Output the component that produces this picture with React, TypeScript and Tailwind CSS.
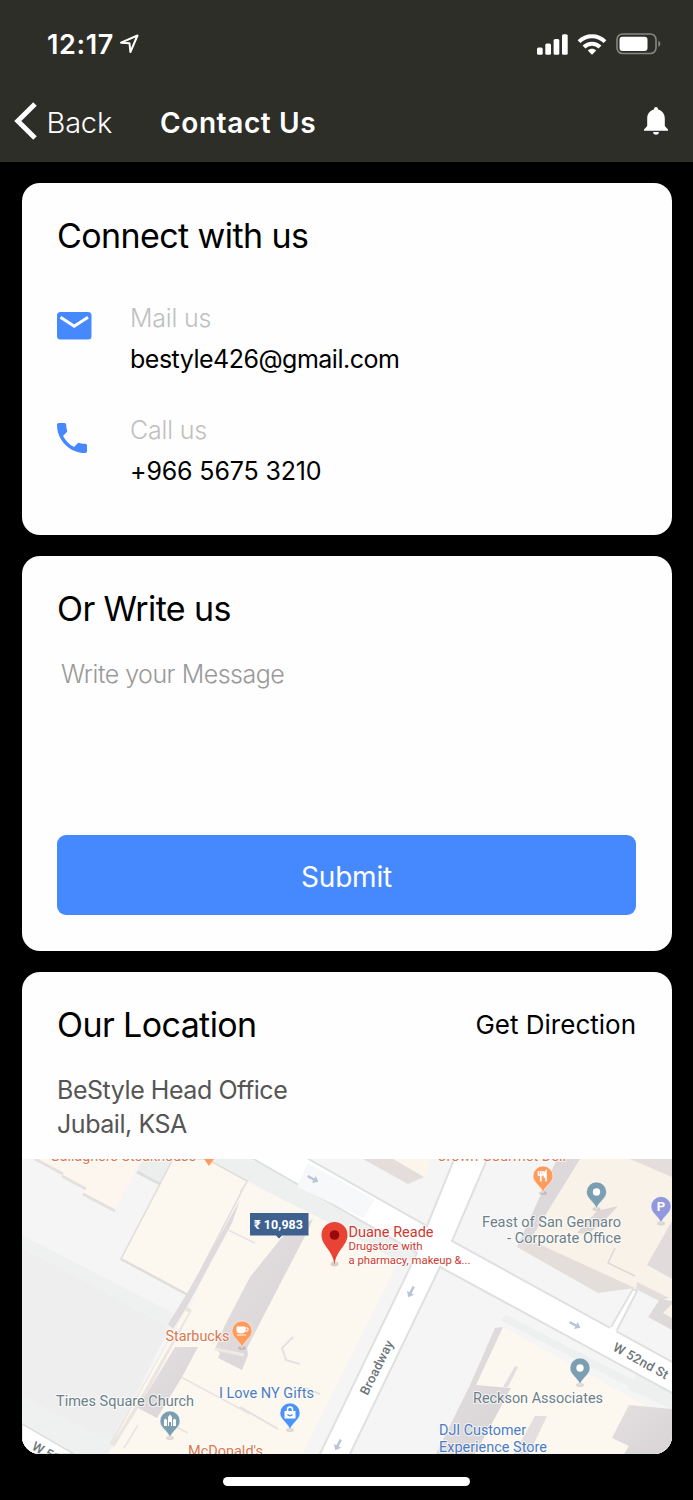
import type { ReactNode } from "react";

const Card = ({ className, children }: { className: string; children: ReactNode }) => (
  <section className={`w-full shrink-0 overflow-hidden rounded-[18px] bg-[#fefefe] ${className}`}>
    {children}
  </section>
);

const Title = ({ children }: { children: string }) => (
  <h2 className="text-[34px] leading-[44px] tracking-[-0.6px]">{children}</h2>
);

const StatusBar = () => (
  <div className="flex h-[84px] items-center justify-between pl-[47px] pr-[32.5px] pt-1">
    <div className="flex items-center gap-[6px]">
      <span className="w-[67px] whitespace-nowrap pt-px text-[27px] font-semibold leading-8 tracking-[0.6px]">12:17</span>
      <svg width="20" height="20" viewBox="0 0 20 20" fill="none" stroke="white" strokeWidth="2" strokeLinejoin="round">
        <path d="M1 8.7 17.500 1.500 10.400 18 9.500 9.300Z" />
      </svg>
    </div>
    <div className="flex items-center gap-[9px]">
      <svg width="31" height="21" viewBox="0 0 31 21" fill="white">
        <rect x="0" y="13.5" width="5.7" height="7.3" rx="1.5" />
        <rect x="8.3" y="9.5" width="5.7" height="11.3" rx="1.5" />
        <rect x="16.6" y="5" width="5.7" height="15.8" rx="1.5" />
        <rect x="25" y="0.2" width="5.7" height="20.6" rx="1.5" />
      </svg>
      <svg width="30" height="21" viewBox="0 0 30 21">
        <g fill="none" stroke="white" strokeWidth="4">
          <path d="M2 7.6C9.5.6 20.500.6 28 7.600" />
          <path d="M7 13C11.500 8.600 18.500 8.600 23 13" />
        </g>
        <path d="M10.800 16.500C13.200 14.200 16.800 14.200 19.200 16.500L15 20.800Z" fill="white" />
      </svg>
      <svg width="45" height="22" viewBox="0 0 45 22">
        <rect x="1" y="1" width="39" height="19.500" rx="5.500" fill="none" stroke="#878783" strokeWidth="1.600" />
        <rect x="3.500" y="3.700" width="28" height="14.300" rx="3" fill="white" />
        <path d="M42.300 7.700C45 9 45 12.500 42.300 13.800Z" fill="#878783" />
      </svg>
    </div>
  </div>
);

const NavBar = () => (
  <div className="flex h-[78px] items-center pl-[14px] pr-[25px]">
    <svg className="-mt-1" width="24" height="38" viewBox="0 0 24 38" fill="none" stroke="white" strokeWidth="5">
      <path d="M21 2 3.800 19 21 36" />
    </svg>
    <span className="ml-[8.5px] w-[113.5px] text-[29px] font-light leading-8 tracking-[-0.2px]">Back</span>
    <h1 className="flex-1 whitespace-nowrap text-[28px] font-semibold leading-8 tracking-[0.6px]">Contact Us</h1>
    <svg className="-mt-1" width="24" height="28" viewBox="0 0 24 28" fill="white">
      <path d="M12 0C13.300 0 14.100 1 14.100 2.500 18.300 3.700 20.800 7 20.800 11.200V19L24 22.500V23.700H0V22.500L3.200 19V11.200C3.200 7 5.700 3.700 9.900 2.500 9.900 1 10.700 0 12 0Z" />
      <path d="M9 25H15C15 26.500 13.700 27.700 12 27.700S9 26.500 9 25Z" />
    </svg>
  </div>
);

const MailIcon = () => (
  <svg width="35" height="28" viewBox="0 0 35 28">
    <rect width="34.500" height="27.500" rx="3.500" fill="#4689ff" />
    <path d="M3.500 5.300 17.200 14.300 31 5.300" fill="none" stroke="white" strokeWidth="3" />
  </svg>
);

const PhoneIcon = () => (
  <svg className="-mt-px" width="30" height="30" viewBox="3 3 18 18" fill="#4689ff">
    <path d="M6.620 10.790c1.440 2.830 3.760 5.140 6.590 6.590l2.200-2.200c.270-.270.670-.360 1.020-.240 1.120.370 2.330.570 3.570.570.550 0 1 .450 1 1V20c0 .550-.450 1-1 1-9.390 0-17-7.610-17-17 0-.550.450-1 1-1h3.500c.550 0 1 .450 1 1 0 1.250.200 2.450.570 3.570.110.350.030.740-.250 1.020l-2.200 2.200z" />
  </svg>
);

type ContactRowProps = { icon: ReactNode; label: string; value: string; valueClass: string };

const ContactRow = ({ icon, label, value, valueClass }: ContactRowProps) => (
  <div className="flex h-[112px]">
    <div className="w-[73px] pt-[14px]">{icon}</div>
    <div>
      <p className="text-[25px] font-light leading-[41px] tracking-[-0.2px] text-[#c0c0c0]">{label}</p>
      <p className={`whitespace-nowrap text-[25px] leading-[41px] ${valueClass}`}>{value}</p>
    </div>
  </div>
);

type PinProps = { x: number; y: number; fill: string; children?: ReactNode };

// x, y is the centre of the pin's head
const Pin = ({ x, y, fill, children }: PinProps) => (
  <g transform={`translate(${x} ${y})`}>
    <ellipse cx="0" cy="17" rx="4" ry="2" fill="#000" opacity="0.12" />
    <path d="M0 17C-1.500 10-10 7-10 0A10 10 0 1 1 10 0C10 7 1.500 10 0 17Z" fill={fill} stroke="white" strokeWidth="0.500" />
    {children}
  </g>
);

type LabelProps = { x: number; y: number; w: number; fill: string; size?: number; children: string };

const Label = ({ x, y, w, fill, size = 14.5, children }: LabelProps) => (
  <text
    x={x}
    y={y}
    textLength={w}
    lengthAdjust="spacingAndGlyphs"
    fontSize={size}
    fill={fill}
    stroke="white"
    strokeWidth="2"
    strokeOpacity="0.700"
    strokeLinejoin="round"
    paintOrder="stroke"
  >
    {children}
  </text>
);

const Arrow = ({ x, y, angle }: { x: number; y: number; angle: number }) => (
  <path
    transform={`translate(${x} ${y}) rotate(${angle})`}
    d="M-6-1.200H1V-4L6 0 1 4V1.200H-6Z"
    fill="#b9c4d6"
  />
);

const ORANGE = "#d97850";
const SLATE = "#6b8088";
const BLUE = "#4b7cc0";
const RED = "#cc392f";

const LocationMap = () => (
  <svg className="block w-full" height="295" viewBox="22 1159 650 295" preserveAspectRatio="none" fontFamily="Roboto, sans-serif" fontWeight="400">
    <defs>
      <linearGradient id="shade" x1="0" y1="0" x2="1" y2="1">
        <stop offset="0" stopColor="#e4dfdf" />
        <stop offset="1" stopColor="#d8d3d6" />
      </linearGradient>
    </defs>
    <rect x="22" y="1159" width="650" height="295" fill="#f5f5f5" />

    {/* block on the west side */}
    <path d="M22 1235 173 1313 168 1330 108 1454H22Z" fill="#eff1f0" />
    <path d="M22 1248 165 1325 166 1334 112 1438 100 1436 22 1396Z" fill="#eeeeee" />
    <path d="M22 1424 74 1454H22Z" fill="#fff" stroke="#dcdddd" strokeWidth="1.500" />
    <path d="M143 1159H173L160 1184 137 1172Z" fill="#eceeee" />
    <path d="M137 1172 160 1184" stroke="#dcdedf" strokeWidth="3" />
    <path d="M212 1159H250L417 1253 405 1268 252 1183 212 1162Z" fill="#eef0ef" />

    {/* buildings between the park and Broadway */}
    <path d="M35 1159 62 1174 62 1177 85 1189 83 1194 115 1211 142 1159Z" fill="#fcf6ee" />
    <path d="M35 1159 63 1174M62 1176 86 1189M83 1194 115 1211" fill="none" stroke="#e5dfdd" strokeWidth="3" />
    <path d="M247 1182 330 1223 396 1260 395 1268 302 1454H108L114 1446 188 1312Z" fill="#fcf7ef" />
    <path d="M173 1159H207L247 1181 188 1295 121 1259Z" fill="#fcf7ef" stroke="#e2dcda" strokeWidth="1.500" />
    <path d="M121 1259 188 1295" stroke="#e2dcda" strokeWidth="2.500" />
    <path d="M240 1200 232 1223 189 1303 183 1313 173 1329 168 1324 186 1295 226 1225Z" fill="#dfdadc" />
    <path d="M187 1307 192 1310 145 1397 114 1447 110 1443 143 1385Z" fill="#ebe5e2" />
    <path d="M185 1311 189 1312 140 1398 117 1436 113 1442Z" fill="#fcf7ef" />
    <path d="M175 1347H198L182 1377 157 1418 138 1408Z" fill="url(#shade)" />
    <path d="M313 1219 305 1236 265 1313 247 1348 248 1355 242 1370 218 1358 220 1353 215 1349 225 1325 250 1277 283 1236Z" fill="url(#shade)" />
    <path d="M215 1349 244 1355" stroke="#efe8e3" strokeWidth="3" />
    <path d="M226 1229 255 1243M181 1377 250 1414M160 1419 188 1433M124 1448 138 1425M240 1192 247 1182" fill="none" stroke="#e9e4e2" strokeWidth="1.500" />
    <path d="M293 1337 282 1348 286 1360 300 1364M305 1388 320 1394M240 1407 278 1429" fill="none" stroke="#e6e1e1" strokeWidth="2" />

    {/* north block */}
    <path d="M390 1159H432L425 1177 408 1184Z" fill="#fbf5ec" />
    <path d="M363 1159H393L424 1177 408 1184Z" fill="#e3dddb" />

    {/* north-east block */}
    <path d="M580 1159H672V1231L633 1290 530 1240Z" fill="#f9f2e9" />
    <path d="M557 1159H580L530 1240 517 1247Z" fill="#ddd8d9" />
    <path d="M517 1247 530 1240 635 1288 598 1293Z" fill="#e4dedb" />
    <path d="M630 1159H672V1177Z" fill="#e3dddb" />
    <path d="M577 1233 597 1211 618 1206 603 1222 588 1234Z" fill="#ddd7d7" />
    <path d="M615 1248 608 1263 635 1276" fill="none" stroke="#ded7d6" strokeWidth="1.500" />
    <path d="M672 1221 647 1265 672 1279Z" fill="#e1dcdb" />
    <path d="M648 1267 672 1281V1295L667 1299 636 1284Z" fill="#f9f2e9" />
    <path d="M637 1282 669 1298 659 1301 636 1289Z" fill="#e3dddb" />
    <path d="M648 1317 660 1299 672 1301V1330Z" fill="#dfdada" />
    <path d="M672 1304V1318L663 1313Z" fill="#f9f2e9" />

    {/* south-east block */}
    <path d="M500 1320 672 1409V1400L506 1315Z" fill="#edf0ef" />
    <path d="M640 1370 628 1389 672 1409V1391Z" fill="#edf0ef" />
    <path d="M503 1327 627 1395 647 1407 672 1409V1454H438Z" fill="#fcf7ef" />
    <path d="M495 1328 503 1327 476 1385 511 1388 497 1414 475 1454H436L470 1385Z" fill="url(#shade)" />
    <path d="M515 1366 518 1367 508 1387 503 1387Z" fill="#e4dfdf" />
    <path d="M535 1416H547L529 1454H514Z" fill="#e4dfdf" />
    <path d="M629 1405 672 1409V1454H624L629 1446 612 1438Z" fill="url(#shade)" />

    {/* streets */}
    <g fill="#fff" stroke="#dfe0e0" strokeWidth="2">
      <path d="M610 1329 633 1289 637 1291 616 1332" />
      <path d="M250 1157 417 1253 318 1458H348L440 1267 674 1394V1363L452 1241 488 1157H455L427 1226 305 1157Z" />
    </g>
    <path d="M308 1163 375 1200 363 1218 297 1187Z" fill="#f6f8fa" />
    <path d="M610 1328 616 1332" stroke="#fff" strokeWidth="3" />
    <Arrow x={313} y={1179} angle={28} />
    <Arrow x={411} y={1292} angle={117} />
    <Arrow x={338} y={1445} angle={117} />
    <Arrow x={575} y={1325} angle={28} />

    <path d="M204 1159H214L209 1166Z" fill="#ff9b5d" />
    <Label x={50} y={1160.500} w={146} fill={ORANGE}>Gallaghers Steakhouse</Label>
    <Label x={437} y={1161} w={129} fill={ORANGE}>Crown Gourmet Deli</Label>

    <Pin x={242} y={1331} fill="#ff9b5d">
      <path d="M-5-4H3V0Q3 2-1 2T-5 0ZM-5 4H4" fill="white" stroke="white" strokeWidth="1" />
      <path d="M3-3H6V0H3" fill="none" stroke="white" />
    </Pin>
    <Pin x={543} y={1176} fill="#ff9b5d">
      <path d="M-4.500-5V-1H0V-5M-2.200-5V5.500M3 5.500V-5Q1.500-4 1.500 1H3" fill="none" stroke="white" strokeWidth="1.700" />
    </Pin>
    <Pin x={596.500} y={1192} fill="#7b9eb0"><circle r="3.700" fill="white" /></Pin>
    <Pin x={580} y={1368} fill="#7b9eb0"><circle r="3.700" fill="white" /></Pin>
    <Pin x={661} y={1206.500} fill="#9198dc">
      <text y="4.500" textAnchor="middle" fontSize="13" fontWeight="700" fill="white">P</text>
    </Pin>
    <Pin x={170} y={1421} fill="#7b9eb0">
      <path d="M-6 5V-1L-4.500-2.500-3-1V5ZM3 5V-1L4.500-2.500 6-1V5ZM-2 5V-4L0-6.500 2-4V5H1V1H-1V5Z" fill="white" />
    </Pin>
    <Pin x={290} y={1413} fill="#4b94f5">
      <path d="M-5.500-2H5.500V5.500H-5.500Z" fill="white" />
      <path d="M-2.500-2V-3.500A2.500 2.500 0 0 1 2.500-3.500V-2" fill="none" stroke="white" strokeWidth="1.500" />
      <path d="M-2.500 1.500Q0 4 2.500 1.500" fill="none" stroke="#4b94f5" strokeWidth="1.300" />
    </Pin>

    <path d="M250 1213H308.500V1235.500H282L279 1238.500 276 1235.500H250Z" fill="#3e6190" />
    <text x="254" y="1228.500" textLength="49" fontSize="12.500" fontWeight="700" fill="white">₹ 10,983</text>

    <ellipse cx="334.500" cy="1264" rx="4" ry="2.500" fill="#000" opacity="0.150" />
    <path d="M334.500 1265C333 1250 321.500 1246 321.500 1235A13 13 0 0 1 347.500 1235C347.500 1246 336 1250 334.500 1265Z" fill="#e94335" />
    <circle cx="334.500" cy="1235" r="4.800" fill="#960a0a" />
    <Label x={348.500} y={1237} w={85} size={15} fill={RED}>Duane Reade</Label>
    <Label x={348.500} y={1250} w={74} size={11.500} fill={RED}>Drugstore with</Label>
    <Label x={348.500} y={1263.500} w={122} size={11.500} fill={RED}>a pharmacy, makeup &amp;...</Label>

    <Label x={165.500} y={1340.500} w={64} fill={ORANGE}>Starbucks</Label>
    <Label x={188} y={1456} w={75} fill={ORANGE}>McDonald's</Label>
    <Label x={56} y={1406} w={138} fill={SLATE}>Times Square Church</Label>
    <Label x={482} y={1226.500} w={139} fill={SLATE}>Feast of San Gennaro</Label>
    <Label x={507} y={1243} w={114} fill={SLATE}>- Corporate Office</Label>
    <Label x={473} y={1403} w={130} fill={SLATE}>Reckson Associates</Label>
    <Label x={219} y={1397.500} w={95} fill={BLUE}>I Love NY Gifts</Label>
    <Label x={439} y={1435} w={87} fill={BLUE}>DJI Customer</Label>
    <Label x={439} y={1452} w={108} fill={BLUE}>Experience Store</Label>

    <g fontSize="13" fontWeight="500" fill="#6d7679">
      <text transform="translate(367.500 1396) rotate(-63.500)" textLength="59">Broadway</text>
      <text transform="translate(612 1350) rotate(29)" textLength="61">W 52nd St</text>
      <text transform="translate(31 1449) rotate(29)">W 51st St</text>
    </g>
  </svg>
);

const App = () => {
  return (
    <div className="flex h-[1500px] w-[693px] flex-col overflow-hidden bg-black font-[Inter,'Noto_Sans',sans-serif] text-black">
      <header className="h-[162px] shrink-0 bg-[#2e2e28] text-white">
        <StatusBar />
        <NavBar />
      </header>

      <main className="flex flex-col gap-[21px] px-[21.5px] pt-[21px]">
        <Card className="h-[352px] px-[35.5px] pt-[31px]">
          <Title>Connect with us</Title>
          <div className="mt-10">
            <ContactRow icon={<MailIcon />} label="Mail us" value="bestyle426@gmail.com" valueClass="tracking-[-0.5px]" />
            <ContactRow icon={<PhoneIcon />} label="Call us" value="+966 5675 3210" valueClass="tracking-[-0.15px]" />
          </div>
        </Card>

        <Card className="flex h-[395px] flex-col px-[35.5px] pt-[31px]">
          <Title>Or Write us</Title>
          <textarea
            className="mt-[21px] h-[164px] w-full resize-none px-1 py-1 text-[25px] font-light leading-9 tracking-[-0.5px] outline-none placeholder:text-[#999]"
            placeholder="Write your Message"
          />
          <button className="mt-[19px] h-20 w-full rounded-[9px] bg-[#4689ff] pt-[3px] text-[28px] tracking-[-0.2px] text-white">
            Submit
          </button>
        </Card>

        <Card className="flex h-[482px] flex-col">
          <div className="flex h-[187px] flex-col px-[35.5px] pt-[31px]">
            <div className="flex items-center justify-between">
              <Title>Our Location</Title>
              <a className="text-[26px] leading-[44px]">Get Direction</a>
            </div>
            <p className="mt-[26px] text-[25px] leading-[34px] tracking-[-0.45px] text-[#555]">
              BeStyle Head Office
              <br />
              Jubail, KSA
            </p>
          </div>
          <LocationMap />
        </Card>
      </main>

      <div className="mx-auto mt-[23px] h-[9px] w-[247px] shrink-0 rounded-full bg-white" />
    </div>
  );
};

export default App;
